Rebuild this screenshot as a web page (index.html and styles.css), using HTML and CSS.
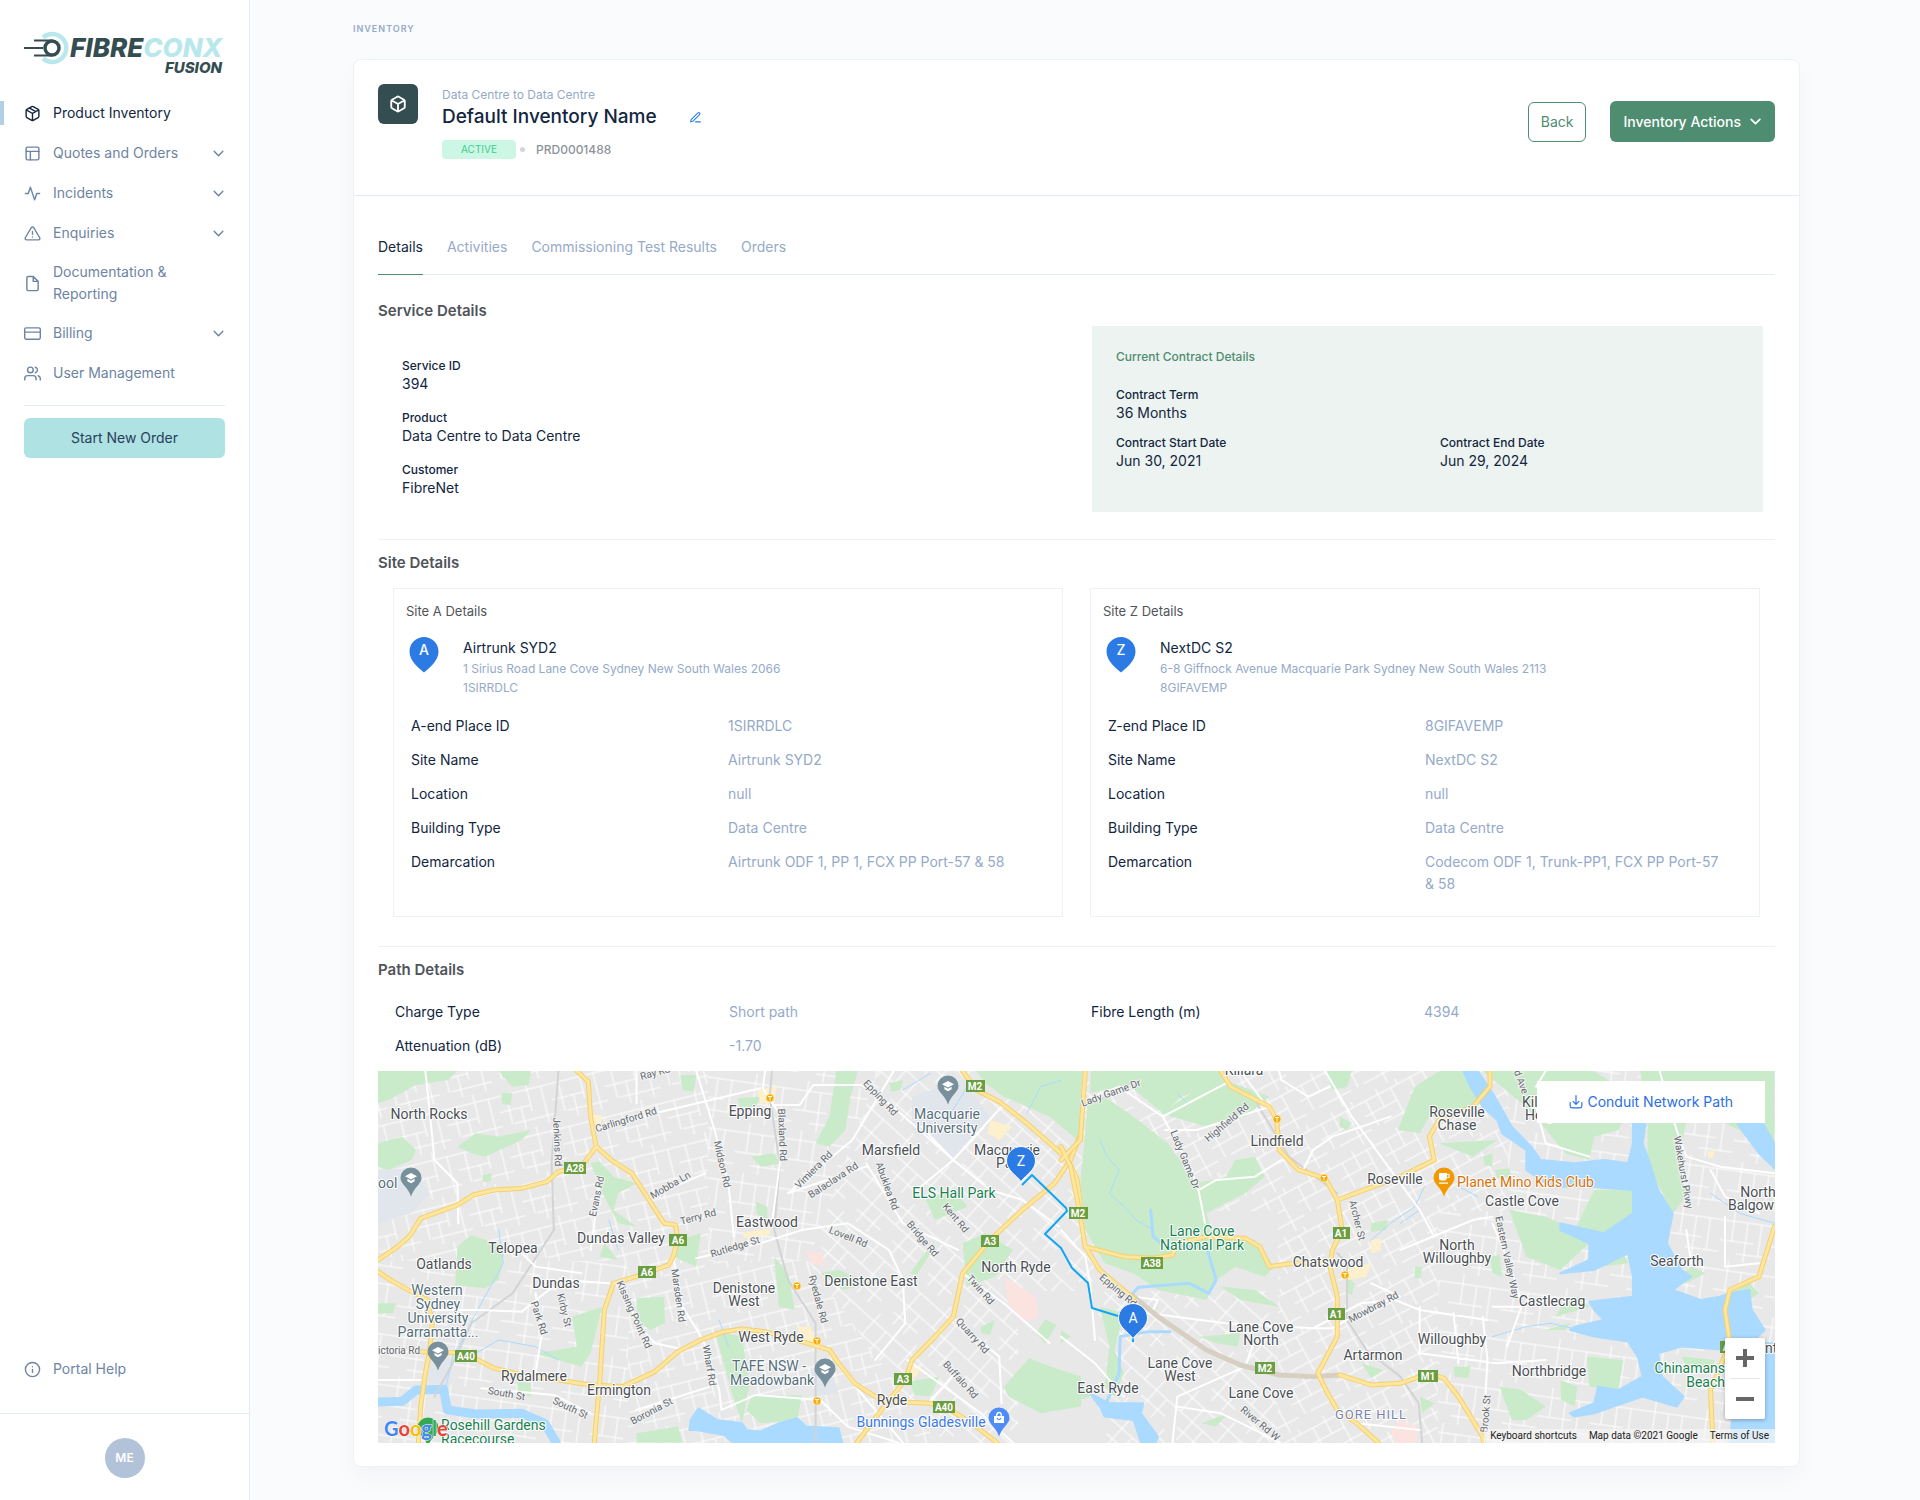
FILE: index.html
```html
<!DOCTYPE html>
<html lang="en">
<head>
<meta charset="utf-8">
<title>Default Inventory Name</title>
<meta name="viewport" content="width=device-width, initial-scale=1">
<link rel="stylesheet" href="styles.css">
</head>
<body>
<svg class="defs" width="0" height="0" aria-hidden="true">
  <symbol id="chev" viewBox="0 0 12 12"><path d="M2 4l4 4 4-4"/></symbol>
</svg>
<div class="app">
  <aside class="sidebar">
    <a class="logo" href="#" aria-label="Fibreconx Fusion">
      <svg viewBox="0 0 201 44" width="201" height="44">
        <path d="M19 5.500a14 14 0 1 1 0 21" fill="none" stroke="#b9e8ec" stroke-width="4.500"/>
        <circle cx="28" cy="16" r="10" fill="#fff"/>
        <path d="M10 8.500h18M0 16h19M10 23.500h18" stroke="#344d50" stroke-width="2.200" fill="none"/>
        <circle cx="28" cy="16" r="7" fill="#fff" stroke="#344d50" stroke-width="3.500"/>
        <text class="logo-main" x="46" y="25" fill="#344d50">FIBRE<tspan fill="#b9e8ec">CONX</tspan></text>
        <text class="logo-sub" x="198" y="41" text-anchor="end" fill="#344d50">FUSION</text>
      </svg>
    </a>
    <nav class="nav">
      <a class="nav-item active" href="#"><svg class="ico" viewBox="0 0 24 24"><path d="M16.500 9.400l-9-5.190M21 16V8a2 2 0 0 0-1-1.730l-7-4a2 2 0 0 0-2 0l-7 4A2 2 0 0 0 3 8v8a2 2 0 0 0 1 1.730l7 4a2 2 0 0 0 2 0l7-4A2 2 0 0 0 21 16zM3.270 6.960L12 12l8.730-5.040M12 22V12"/></svg><span>Product Inventory</span></a>
      <a class="nav-item" href="#"><svg class="ico" viewBox="0 0 24 24"><rect x="3" y="3" width="18" height="18" rx="2"/><path d="M3 9h18M9 21V9"/></svg><span>Quotes and Orders</span><svg class="chev"><use href="#chev"/></svg></a>
      <a class="nav-item" href="#"><svg class="ico" viewBox="0 0 24 24"><path d="M22 12h-4l-3 9L9 3l-3 9H2"/></svg><span>Incidents</span><svg class="chev"><use href="#chev"/></svg></a>
      <a class="nav-item" href="#"><svg class="ico" viewBox="0 0 24 24"><path d="M10.290 3.860L1.820 18a2 2 0 0 0 1.710 3h16.940a2 2 0 0 0 1.710-3L13.710 3.860a2 2 0 0 0-3.420 0zM12 9v4M12 17h.01"/></svg><span>Enquiries</span><svg class="chev"><use href="#chev"/></svg></a>
      <a class="nav-item" href="#"><svg class="ico" viewBox="0 0 24 24"><path d="M13 2H6a2 2 0 0 0-2 2v16a2 2 0 0 0 2 2h12a2 2 0 0 0 2-2V9zM13 2v7h7"/></svg><span>Documentation &amp; Reporting</span></a>
      <a class="nav-item" href="#"><svg class="ico" viewBox="0 0 24 24"><rect x="1" y="4" width="22" height="16" rx="2"/><path d="M1 10h22"/></svg><span>Billing</span><svg class="chev"><use href="#chev"/></svg></a>
      <a class="nav-item" href="#"><svg class="ico" viewBox="0 0 24 24"><path d="M17 21v-2a4 4 0 0 0-4-4H5a4 4 0 0 0-4 4v2M23 21v-2a4 4 0 0 0-3-3.870M16 3.130a4 4 0 0 1 0 7.750"/><circle cx="9" cy="7" r="4"/></svg><span>User Management</span></a>
    </nav>
    <div class="new-order"><button type="button">Start New Order</button></div>
    <div class="nav help">
      <a class="nav-item" href="#"><svg class="ico" viewBox="0 0 24 24"><circle cx="12" cy="12" r="10"/><path d="M12 16v-4M12 8h.01"/></svg><span>Portal Help</span></a>
    </div>
    <div class="user"><button type="button" class="avatar">ME</button></div>
  </aside>

  <main class="main">
    <div class="pretitle">INVENTORY</div>
    <article class="card">
      <header class="card-head">
        <div class="prod-icon"><svg viewBox="0 0 24 24"><path d="M21 16V8a2 2 0 0 0-1-1.730l-7-4a2 2 0 0 0-2 0l-7 4A2 2 0 0 0 3 8v8a2 2 0 0 0 1 1.730l7 4a2 2 0 0 0 2 0l7-4A2 2 0 0 0 21 16zM3.270 6.960L12 12l8.730-5.040M12 22V12"/></svg></div>
        <div class="prod">
          <div class="prod-type">Data Centre to Data Centre</div>
          <div class="prod-title"><h1>Default Inventory Name</h1><button type="button" class="edit" aria-label="Edit name"><svg viewBox="0 0 24 24"><path d="M12 20h9" /><path d="M16.500 3.500a2.120 2.120 0 0 1 3 3L7 19l-4 1 1-4z"/></svg></button></div>
          <div class="prod-meta"><span class="badge">ACTIVE</span><span class="dot"></span><span class="code">PRD0001488</span></div>
        </div>
        <div class="actions">
          <button type="button" class="btn-outline">Back</button>
          <button type="button" class="btn-solid">Inventory Actions<svg class="chev"><use href="#chev"/></svg></button>
        </div>
      </header>

      <div class="card-body">
        <nav class="tabs">
          <a class="tab on" href="#">Details</a>
          <a class="tab" href="#">Activities</a>
          <a class="tab" href="#">Commissioning Test Results</a>
          <a class="tab" href="#">Orders</a>
        </nav>

        <section class="service">
          <h2>Service Details</h2>
          <div class="service-grid">
            <dl class="facts">
              <div><dt>Service ID</dt><dd>394</dd></div>
              <div><dt>Product</dt><dd>Data Centre to Data Centre</dd></div>
              <div><dt>Customer</dt><dd>FibreNet</dd></div>
            </dl>
            <div class="contract">
              <h3>Current Contract Details</h3>
              <dl class="contract-facts">
                <div class="wide"><dt>Contract Term</dt><dd>36 Months</dd></div>
                <div><dt>Contract Start Date</dt><dd>Jun 30, 2021</dd></div>
                <div><dt>Contract End Date</dt><dd>Jun 29, 2024</dd></div>
              </dl>
            </div>
          </div>
        </section>

        <section class="sites">
          <h2>Site Details</h2>
          <div class="site-grid">
            <div class="site">
              <h3>Site A Details</h3>
              <div class="site-head">
                <svg class="pin" viewBox="0 0 30 36" width="30" height="36"><path d="M15 0C23 0 29.500 6.400 29.500 14.500 29.500 24 20 31 15 35.500 10 31 .5 24 .5 14.500 .5 6.400 7 0 15 0z" fill="#2c7be5"/><text x="15" y="18" text-anchor="middle">A</text></svg>
                <div><div class="site-name">Airtrunk SYD2</div><div class="site-addr">1 Sirius Road Lane Cove Sydney New South Wales 2066<br>1SIRRDLC</div></div>
              </div>
              <dl class="rows">
                <dt>A-end Place ID</dt><dd>1SIRRDLC</dd>
                <dt>Site Name</dt><dd>Airtrunk SYD2</dd>
                <dt>Location</dt><dd>null</dd>
                <dt>Building Type</dt><dd>Data Centre</dd>
                <dt>Demarcation</dt><dd>Airtrunk ODF 1, PP 1, FCX PP Port-57 &amp; 58</dd>
              </dl>
            </div>
            <div class="site">
              <h3>Site Z Details</h3>
              <div class="site-head">
                <svg class="pin" viewBox="0 0 30 36" width="30" height="36"><path d="M15 0C23 0 29.500 6.400 29.500 14.500 29.500 24 20 31 15 35.500 10 31 .5 24 .5 14.500 .5 6.400 7 0 15 0z" fill="#2c7be5"/><text x="15" y="18" text-anchor="middle">Z</text></svg>
                <div><div class="site-name">NextDC S2</div><div class="site-addr">6-8 Giffnock Avenue Macquarie Park Sydney New South Wales 2113<br>8GIFAVEMP</div></div>
              </div>
              <dl class="rows">
                <dt>Z-end Place ID</dt><dd>8GIFAVEMP</dd>
                <dt>Site Name</dt><dd>NextDC S2</dd>
                <dt>Location</dt><dd>null</dd>
                <dt>Building Type</dt><dd>Data Centre</dd>
                <dt>Demarcation</dt><dd>Codecom ODF 1, Trunk-PP1, FCX PP Port-57 &amp; 58</dd>
              </dl>
            </div>
          </div>
        </section>

        <section class="path">
          <h2>Path Details</h2>
          <dl class="rows path-rows">
            <dt>Charge Type</dt><dd>Short path</dd>
            <dt>Fibre Length (m)</dt><dd>4394</dd>
            <dt>Attenuation (dB)</dt><dd>-1.70</dd>
          </dl>
          <div class="map">
            <svg class="map-art" viewBox="0 0 1397 372" preserveAspectRatio="xMidYMid slice" role="img" aria-label="Map of the network path">
              <defs>
                <pattern id="s1" width="54" height="46" patternUnits="userSpaceOnUse" patternTransform="rotate(-14)"><path class="st" d="M0 8H54M0 24H32M12 38H54M10 8V38M32 0V30M46 8V46M22 24V46"/></pattern>
                <pattern id="s2" width="48" height="52" patternUnits="userSpaceOnUse" patternTransform="rotate(42)"><path class="st" d="M0 10H48M0 28H48M16 42H48M8 0V28M24 10V52M38 28V52"/></pattern>
                <pattern id="s3" width="50" height="44" patternUnits="userSpaceOnUse" patternTransform="rotate(-28)"><path class="st" d="M0 6H50M0 20H36M14 34H50M8 6V34M22 0V20M36 6V44M44 0V6"/></pattern>
                <pattern id="s4" width="52" height="50" patternUnits="userSpaceOnUse" patternTransform="rotate(8)"><path class="st" d="M0 10H52M0 30H34M18 42H52M12 0V30M26 10V50M40 10V42"/></pattern>
                <path id="poi" d="M0-10.500A10.500 10.500 0 0 1 10.500 0C10.500 6 3 9 0 18.500-3 9-10.500 6-10.500 0A10.500 10.500 0 0 1 0-10.500z"/>
                <path id="cap" d="M0-5l6 3.200L0 1.400-6-1.800zM-3.600.800L0 2.800 3.600.800V3.200L0 5.200-3.600 3.200z" fill="#fff"/>
                <path id="mark" d="M0-15.500C8-15.500 14.500-9 14.500-1 14.500 8 5 13 0 19.500-5 13-14.500 8-14.500-1-14.500-9-8-15.500 0-15.500z" fill="#2c7be5" stroke="#fff" stroke-width="1"/>
              </defs>
              <rect width="1397" height="372" fill="#e8e8e8"/>
              <rect width="330" height="190" fill="url(#s1)"/>
              <path d="M330 0H500L430 190H330zM0 190H250V372H0z" fill="url(#s4)"/>
              <path d="M500 0H720V372H560L430 190zM640 372H900V220H640z" fill="url(#s2)"/>
              <path d="M250 190H430L560 372H250z" fill="url(#s1)"/>
              <path d="M720 0H1130V140H720zM900 140H1060V372H900z" fill="url(#s3)"/>
              <path d="M1060 140H1397V372H1060zM1130 0H1397V140H1130z" fill="url(#s4)"/>

              <!-- western half -->
              <g class="half" transform="matrix(.4592 0 0 .3333 -17 -141)">
                <path class="campus" d="M1200 500L1310 450 1370 560 1290 680 1200 600zM37 720L110 715 150 790 110 850 37 880zM150 1270L200 1290 190 1370 130 1350zM980 1320L1020 1320 1040 1390 990 1400z"/>
                <path class="green" d="M37 423H210L190 450 120 465 60 510 37 520zM300 423H370L365 465 330 470 310 440zM305 490L330 490 325 525 308 522zM37 640L90 620 120 660 110 690 60 720 37 710zM210 650L250 610 300 620 370 600 350 630 270 680 240 670zM1035 423H1082L1066 500 1055 600 1020 650 990 640 1020 560zM850 680L900 670 912 700 870 710zM695 435L730 435 725 485 700 480zM820 505L870 500 860 530 825 530zM500 700L520 695 550 740 600 760 560 790 550 840 600 890 560 880 530 800zM210 950L240 915 315 950 300 1050 270 1075 205 1065zM37 1120H75L70 1150 37 1150zM460 1160L525 1130 500 1270 480 1310 400 1280 380 1270 470 1250zM600 1105L660 1100 662 1180 630 1200 600 1170zM770 1200L830 1220 845 1370 830 1480 810 1400 790 1300zM850 1400L960 1395 950 1470 870 1480 840 1440zM600 1510L690 1490 700 1538 600 1538zM690 930L740 910 730 1010 680 980zM900 980L930 1030 945 1140 910 1130zM1195 1030L1250 930 1240 970 1210 1035zM1400 1370L1455 1285 1500 1310 1568 1340V1430L1480 1450 1410 1400zM1470 1210L1490 1168 1515 1185 1490 1240zM1310 940L1360 910 1420 960 1380 1040 1320 1070zM1340 423H1568V640L1500 560 1400 500 1360 460zM1230 810L1290 775 1320 830 1250 870zM1195 1355L1260 1340 1240 1400 1205 1395zM1150 460L1180 450 1175 480 1155 485zM265 735L285 730 282 755 265 755zM1000 1030L1040 1020 1110 1060 1050 1080zM340 1355L370 1360 370 1400 342 1390zM1350 1190L1380 1170 1370 1215 1350 1210zM860 815L885 830 885 880 862 850zM530 940L560 990 520 980z"/>
                <path class="pink" d="M968 960L1005 970 1010 1008 980 1000zM1400 1040L1470 1100 1475 1160 1440 1180 1410 1120z"/>
                <path class="sand" d="M862 480L905 470 900 520 870 520zM505 555L525 555 520 600 508 600zM830 910L890 895 890 915 835 925zM1370 570L1418 590 1390 630 1365 610zM1190 1310L1220 1310 1210 1340 1190 1350zM950 1190L980 1190 990 1240 960 1230z"/>
                <path class="brook" d="M1550 440L1480 470 1450 550M1320 470L1280 560M300 900L310 1000 250 1150 200 1280 185 1370M540 870L560 960M250 1270L300 1230 380 1250 430 1290M780 1170L800 1250M1180 480L1240 430"/>
                <path class="river" d="M37 1416L90 1414 120 1380 180 1378 188 1440 250 1452 350 1450 400 1480 425 1538"/>
                <path class="water" d="M715 1500L718 1470 735 1435 775 1470 830 1480 840 1500 870 1505 910 1480 950 1465 970 1490 1040 1495 1048 1538H810L790 1515 730 1500z"/>
                <path class="rail" d="M895 423L890 500 912 700 900 900 930 1050 990 1180 990 1538M430 423L415 700 420 900 330 1090 240 1180 200 1300 160 1400"/>
                <path class="road" d="M512 602L640 550 870 475M730 423L770 600 800 760 812 920M880 423L875 475 915 560 912 700 895 880M900 525H955L985 465H1090L1150 520 1290 690 1370 780 1440 810 1520 890M1220 590L1290 690M1395 530L1290 690 1210 780M140 423L150 550 160 690 210 760 212 880M600 423L600 520M630 800L750 730M680 980L700 1130 745 1230 780 1380 785 1440 860 1395 1000 1410M730 985L870 940 960 900 1060 880 1150 960 1180 1050 1185 1180 1120 1290M1290 1165L1390 1280 1395 1420M1310 1030L1400 1120 1500 1240M150 1140H260L350 1145 400 1090 440 1050 540 1060M930 790L1100 710M930 790L1070 630 1160 423M1190 1290L1350 1450 1420 1538M1235 1420L1300 1320M570 1060L600 1180 640 1240 690 1255M262 1375L420 1395 500 1450M520 760L510 860 500 960M37 1265H150M37 1350L130 1350M380 1090L395 1200 380 1330M600 1440L760 1370M1100 700L1180 880 1300 960M1040 1310L1180 1538M350 970L380 1010 480 1030M1000 1410L1060 1490 1170 1538"/>
                <g class="hw">
                  <path d="M470 423L495 455 500 560 512 650 545 690 590 730 625 805 660 880 685 885 690 925 680 980 670 1005 610 1035 550 1060 530 1140 520 1350 508 1538"/>
                  <path d="M512 650L480 710 430 725 405 755 350 775 290 780 245 795 210 825 130 865 105 920 80 950 37 990"/>
                  <path d="M37 1025L70 1055 110 1085 145 1110 155 1180 150 1260 140 1330 130 1430 125 1538"/>
                  <path d="M120 1265L200 1268 240 1280 290 1315 350 1335 430 1350 500 1365 570 1370 640 1325 690 1265 740 1230 790 1205 830 1197 880 1205 960 1235 1020 1260 1040 1300 1075 1360 1120 1400 1150 1415 1240 1420 1290 1445 1340 1490 1385 1538"/>
                  <path d="M1568 610L1545 690 1510 760 1440 840 1370 930 1310 1030 1290 1160 1250 1220 1200 1290 1185 1350 1150 1410 1080 1538"/>
                  <path d="M1310 423L1340 480 1390 515 1450 580 1500 640 1540 690 1560 750 1568 840"/>
                </g>
                <g class="hw top">
                  <path d="M470 423L495 455 500 560 512 650 545 690 590 730 625 805 660 880 685 885 690 925 680 980 670 1005 610 1035 550 1060 530 1140 520 1350 508 1538"/>
                  <path d="M512 650L480 710 430 725 405 755 350 775 290 780 245 795 210 825 130 865 105 920 80 950 37 990"/>
                  <path d="M37 1025L70 1055 110 1085 145 1110 155 1180 150 1260 140 1330 130 1430 125 1538"/>
                  <path d="M120 1265L200 1268 240 1280 290 1315 350 1335 430 1350 500 1365 570 1370 640 1325 690 1265 740 1230 790 1205 830 1197 880 1205 960 1235 1020 1260 1040 1300 1075 1360 1120 1400 1150 1415 1240 1420 1290 1445 1340 1490 1385 1538"/>
                  <path d="M1568 610L1545 690 1510 760 1440 840 1370 930 1310 1030 1290 1160 1250 1220 1200 1290 1185 1350 1150 1410 1080 1538"/>
                  <path d="M1310 423L1340 480 1390 515 1450 580 1500 640 1540 690 1560 750 1568 840"/>
                </g>
              </g>

              <!-- eastern half -->
              <g class="half" transform="matrix(.4847 0 0 .3333 683 -141)">
                <path class="green" d="M0 423H45L35 600 0 560zM55 520L90 500 150 560 220 640 280 760 340 740 360 690 400 680 420 740 380 790 300 850 310 900 400 930 440 1010 420 1040 360 1010 320 1050 300 1110 200 1080 150 1030 90 1000 50 900 40 760zM62 423H330L340 445 250 500 210 550 140 465 60 490zM205 550L320 440 430 500 380 560 300 590zM545 423H600L590 470 560 480zM695 600L730 470 780 423H845L870 500 830 540 760 560 740 610zM780 640L900 630 850 680zM870 423H1100L1180 500 1150 600 1100 620 1090 690 1040 670 990 580 950 520zM1195 423H1472V720L1400 600 1340 560 1290 570 1275 700 1290 800 1262 850 1230 760 1210 700 1210 578zM1060 900L1100 780 1190 780 1220 830 1190 890 1110 910zM925 840L1000 860 1060 900 1090 940 1030 1020 960 980zM330 1070L400 1080 450 1130 370 1110zM285 1220L370 1210 365 1250 320 1240zM80 1130L130 1150 110 1260 130 1330 110 1400 90 1370 100 1250zM0 1340L40 1350 60 1400 0 1430zM1085 1280L1160 1290 1150 1380 1090 1370zM1030 1350L1065 1370 1060 1430 1032 1410zM905 1370L950 1380 1000 1430 960 1470 930 1470zM1020 1160L1090 1130 1070 1100 1040 1110zM1060 1020L1170 1000 1160 970 1090 1000zM640 880L675 870 670 900 640 905zM730 1010L745 1010 742 1045 730 1045zM885 980L905 975 910 1040 890 1030zM870 680L890 670 890 710 875 705zM895 720L925 715 930 740 900 745zM740 1400L770 1420 745 1450zM810 1310L845 1310 840 1345 812 1340zM620 1300L665 1320 640 1345zM575 560L600 580 590 600 575 590zM1275 1040L1300 1010 1330 1030 1290 1060zM1380 1090L1420 1060 1440 1090 1400 1130zM1000 1200L1050 1180 1040 1200zM195 640L210 640 205 700 195 700zM290 1480L345 1450 320 1490zM1280 1280L1350 1290 1340 1320 1290 1310zM590 1040L605 1060 600 1095 590 1090zM0 1200V1240L20 1220z"/>
                <path class="pink" d="M680 1500L700 1470 735 1490 735 1538 690 1538z"/>
                <path class="sand" d="M640 930L660 925 660 960 640 970zM585 1020L640 1000 630 1040 590 1050zM1335 665L1350 660 1345 685 1335 680z"/>
                <path class="river thin" d="M185 840L190 920 215 950 300 950 320 1050 305 1090 265 1060 160 1072 135 1110M225 1205L180 1205 122 1220 120 1330 90 1430"/>
                <path class="brook" d="M80 630L95 680 120 720 100 790 130 830 155 870 190 900M890 1220L960 1190 1010 1180 1070 1200M750 770L730 830 680 880 640 930M820 770L860 800M700 880L740 840M1340 790L1400 850 1472 880M240 490L260 520"/>
                <path class="water" d="M830 423L860 423 895 500 930 590 970 650 990 690 1060 700 1120 690 1170 700 1180 640 1180 560H1208L1200 640 1215 700 1232 780 1262 850 1250 940 1280 1020 1300 1040 1262 1080 1320 1110 1360 1100 1380 1090 1420 1080 1425 1140 1452 1200 1430 1230 1370 1220 1375 1260 1280 1250 1232 1270 1240 1340 1285 1400 1270 1430 1200 1400 1140 1430 1100 1450 1060 1460 1050 1450 1100 1420 1108 1370 1150 1380 1200 1340 1190 1280 1170 1235 1100 1220 1050 1200 1060 1190 1120 1170 1100 1140 1090 1115 1180 1100 1180 1040 1170 970 1100 1020 1030 1030 1090 990 1090 940 1030 900 1030 880 1120 910 1180 850 1180 780 1090 770 1010 770 960 720 960 660 910 610 900 570 870 530 845 470zM1385 560H1440L1472 640V715L1440 670zM1455 1240H1472V1538H1380L1385 1460 1440 1460zM60 1390L100 1420 170 1420 165 1450 200 1520 195 1538H165L150 1470 90 1460 80 1430z"/>
                <path class="rail" d="M400 510L470 680 570 790M570 970L590 1000 590 1170 630 1260 700 1340 738 1420 745 1538"/>
                <path class="road" d="M1235 423L1270 600 1290 680 1360 710 1472 730M545 423L600 560 680 720 740 840 770 920M50 510L120 470 210 560 270 720 285 790 297 880M210 560L340 460M215 600L280 600 345 570 430 530M285 780L320 750 400 740 455 690M500 720L520 660 560 620 680 560M370 423L430 540M180 1150L340 1180 520 1195 620 1120 690 1110 740 1140 880 1170M890 1130H950L920 1250M810 1150L820 1300M740 1130V1270L900 1300 1000 1290M230 1538L240 1400 380 1310 400 1230M240 1430L330 1450 400 1500 450 1538M890 880L930 1020 950 1120M0 900L50 980 60 1060 70 1230M0 1220L70 1300 130 1400M450 423L455 450 510 500 555 470M700 960L850 870 890 860M870 1160L880 1290 870 1538M1290 900L1300 1000M1440 1000L1370 1010 1370 860M590 1170L560 1195 520 1195M640 1060L700 1100M150 1100L200 1110 190 1140M980 530L1000 640 1090 680M1340 720L1370 800 1440 850M610 1480L740 1500M1000 423L980 470"/>
                <path class="tunnel" d="M150 1100L200 1160 250 1210 300 1260 370 1305 450 1335 520 1340 575 1335"/>
                <g class="hw">
                  <path d="M50 423L40 630 0 690"/>
                  <path d="M0 650L20 710 40 860 50 950 80 1020 120 1070 150 1105"/>
                  <path d="M575 1335L640 1365 700 1360 760 1330 790 1345 820 1400 870 1520 872 1538"/>
                  <path d="M50 950L130 980 190 985 230 975 240 940 300 920 380 925 410 950 430 1010 480 1000 555 1000"/>
                  <path d="M330 423L350 470 430 530 445 570 450 660 490 720 545 745 570 810 580 900 560 960 555 1010 570 1100 570 1220 530 1330 550 1390 570 1440 610 1480 655 1538"/>
                  <path d="M885 423L885 470 850 530 780 570 760 620 770 690 700 740 570 810"/>
                  <path d="M1472 890L1440 1040 1380 1080 1370 1140 1380 1240 1340 1380 1345 1538"/>
                </g>
                <g class="hw top">
                  <path d="M50 423L40 630 0 690"/>
                  <path d="M0 650L20 710 40 860 50 950 80 1020 120 1070 150 1105"/>
                  <path d="M575 1335L640 1365 700 1360 760 1330 790 1345 820 1400 870 1520 872 1538"/>
                  <path d="M50 950L130 980 190 985 230 975 240 940 300 920 380 925 410 950 430 1010 480 1000 555 1000"/>
                  <path d="M330 423L350 470 430 530 445 570 450 660 490 720 545 745 570 810 580 900 560 960 555 1010 570 1100 570 1220 530 1330 550 1390 570 1440 610 1480 655 1538"/>
                  <path d="M885 423L885 470 850 530 780 570 760 620 770 690 700 740 570 810"/>
                  <path d="M1472 890L1440 1040 1380 1080 1370 1140 1380 1240 1340 1380 1345 1538"/>
                </g>
              </g>
              <path class="route" d="M644 114L654 104 688 137 689 140 667 163 683 177 694 197 710 212 714 237 740 245 755 246M755 264V271"/>

              <g class="street">
                <text transform="translate(249 52) rotate(-17)">Carlingford Rd</text>
                <text transform="translate(176 71) rotate(88)">Jenkins Rd</text>
                <text transform="translate(401 64) rotate(88)">Blaxland Rd</text>
                <text transform="translate(341 94) rotate(77)">Midson Rd</text>
                <text transform="translate(294 117) rotate(-30)">Mobba Ln</text>
                <text transform="translate(222 126) rotate(-78)">Evans Rd</text>
                <text transform="translate(321 149) rotate(-15)">Terry Rd</text>
                <text transform="translate(500 29) rotate(47)">Epping Rd</text>
                <text transform="translate(438 101) rotate(-45)">Vimiera Rd</text>
                <text transform="translate(457 112) rotate(-33)">Balaclava Rd</text>
                <text transform="translate(506 116) rotate(70)">Abuklea Rd</text>
                <text transform="translate(575 149) rotate(50)">Kent Rd</text>
                <text transform="translate(542 170) rotate(50)">Bridge Rd</text>
                <text transform="translate(469 169) rotate(22)">Lovell Rd</text>
                <text transform="translate(358 179) rotate(-17)">Rutledge St</text>
                <text transform="translate(437 229) rotate(75)">Ryedale Rd</text>
                <text transform="translate(297 225) rotate(82)">Marsden Rd</text>
                <text transform="translate(253 245) rotate(66)">Kissing Point Rd</text>
                <text transform="translate(183 240) rotate(76)">Kirby St</text>
                <text transform="translate(158 248) rotate(72)">Park Rd</text>
                <text transform="translate(600 221) rotate(48)">Twin Rd</text>
                <text transform="translate(592 267) rotate(48)">Quarry Rd</text>
                <text transform="translate(580 311) rotate(48)">Buffalo Rd</text>
                <text transform="translate(328 295) rotate(80)">Wharf Rd</text>
                <text transform="translate(275 343) rotate(-28)">Boronia St</text>
                <text transform="translate(128 326) rotate(10)">South St</text>
                <text transform="translate(191 340) rotate(25)">South St</text>
                <text class="start" x="0" y="283">ictoria Rd</text>
                <text transform="translate(278 5) rotate(-15)">Ray Rd</text>
                <text transform="translate(734 25) rotate(-20)">Lady Game Dr</text>
                <text transform="translate(804 90) rotate(68)">Lady Game Dr</text>
                <text transform="translate(851 54) rotate(-40)">Highfield Rd</text>
                <text transform="translate(976 150) rotate(76)">Archer St</text>
                <text transform="translate(1126 187) rotate(78)">Eastern Valley Way</text>
                <text transform="translate(997 239) rotate(-28)">Mowbray Rd</text>
                <text transform="translate(1111 343) rotate(-85)">Brook St</text>
                <text transform="translate(1302 102) rotate(80)">Wakehurst Pkwy</text>
                <text transform="translate(880 355) rotate(40)">River Rd W</text>
                <text transform="translate(738 222) rotate(40)">Epping Rd</text>
                <text transform="translate(1140 12) rotate(70)">d Ave</text>
              </g>

              <g class="place">
                <text x="51" y="48">North Rocks</text><text x="372" y="45">Epping</text>
                <text x="513" y="84">Marsfield</text><text x="629" y="84">Macquarie</text><text x="632" y="97">Park</text>
                <text x="1079" y="46">Roseville</text><text x="1079" y="59">Chase</text>
                <text class="start" x="1144" y="36">Killarney</text><text class="start" x="1147" y="49">Heights</text>
                <text x="899" y="75">Lindfield</text><text x="1017" y="113">Roseville</text><text x="1144" y="135">Castle Cove</text>
                <text x="1380" y="126">North</text><text class="start" x="1350" y="139">Balgowlah</text>
                <text x="389" y="156">Eastwood</text><text x="243" y="172">Dundas Valley</text><text x="135" y="182">Telopea</text>
                <text x="66" y="198">Oatlands</text><text x="178" y="217">Dundas</text>
                <text x="366" y="222">Denistone</text><text x="366" y="235">West</text><text x="493" y="215">Denistone East</text>
                <text x="638" y="201">North Ryde</text><text x="950" y="196">Chatswood</text>
                <text x="1079" y="179">North</text><text x="1079" y="192">Willoughby</text>
                <text x="1299" y="195">Seaforth</text><text x="1174" y="235">Castlecrag</text>
                <text x="393" y="271">West Ryde</text><text x="156" y="310">Rydalmere</text><text x="241" y="324">Ermington</text>
                <text x="514" y="334">Ryde</text><text x="730" y="322">East Ryde</text>
                <text x="883" y="261">Lane Cove</text><text x="883" y="274">North</text>
                <text x="802" y="297">Lane Cove</text><text x="802" y="310">West</text><text x="883" y="327">Lane Cove</text>
                <text x="995" y="289">Artarmon</text><text x="1074" y="273">Willoughby</text><text x="1171" y="305">Northbridge</text>
                <text class="start" x="1387" y="282">nt</text><text x="866" y="4">Killara</text>
              </g>
              <g class="place uni">
                <text x="569" y="48">Macquarie</text><text x="569" y="62">University</text>
                <text class="start" x="0" y="117">ool</text>
                <text x="59" y="224">Western</text><text x="60" y="238">Sydney</text><text x="60" y="252">University</text><text x="60" y="266">Parramatta...</text>
                <text x="391" y="300">TAFE NSW -</text><text x="394" y="314">Meadowbank</text>
              </g>
              <g class="place park">
                <text x="576" y="127">ELS Hall Park</text><text x="824" y="165">Lane Cove</text><text x="824" y="179">National Park</text>
                <text class="end" x="1347" y="302">Chinamans</text><text class="end" x="1347" y="316">Beach</text>
                <text class="start" x="63" y="359">Rosehill Gardens</text><text class="start" x="63" y="373">Racecourse</text>
              </g>
              <g class="place food"><text class="start" x="1079" y="116">Planet Mino Kids Club</text></g>
              <g class="place shop"><text x="543" y="356">Bunnings Gladesville</text></g>
              <g class="place area"><text x="993" y="348">GORE HILL</text></g>

              <g class="shield">
                <rect x="588" y="9" width="19" height="12"/><text x="597" y="19">M2</text>
                <rect x="186" y="91" width="22" height="12"/><text x="197" y="101">A28</text>
                <rect x="291" y="163" width="18" height="12"/><text x="300" y="173">A6</text>
                <rect x="260" y="195" width="18" height="12"/><text x="269" y="205">A6</text>
                <rect x="603" y="164" width="18" height="12"/><text x="612" y="174">A3</text>
                <rect x="77" y="279" width="22" height="12"/><text x="88" y="289">A40</text>
                <rect x="516" y="302" width="18" height="12"/><text x="525" y="312">A3</text>
                <rect x="555" y="330" width="22" height="12"/><text x="566" y="340">A40</text>
                <rect x="691" y="136" width="19" height="12"/><text x="700" y="146">M2</text>
                <rect x="763" y="186" width="22" height="12"/><text x="774" y="196">A38</text>
                <rect x="955" y="156" width="17" height="12"/><text x="963" y="166">A1</text>
                <rect x="950" y="237" width="17" height="12"/><text x="958" y="247">A1</text>
                <rect x="877" y="291" width="20" height="12"/><text x="887" y="301">M2</text>
                <rect x="1040" y="299" width="20" height="12"/><text x="1050" y="309">M1</text>
                <rect x="1342" y="270" width="18" height="12"/><text x="1351" y="280">A8</text>
              </g>
              <g class="station">
                <circle cx="392" cy="27" r="4"/><circle cx="419" cy="215" r="4"/><circle cx="439" cy="270" r="4"/><circle cx="439" cy="330" r="4"/><circle cx="899" cy="48" r="4"/><circle cx="946" cy="107" r="4"/><circle cx="967" cy="204" r="4"/>
                <path d="M390 25.500h4M392 25.500v4M417 213.500h4M419 213.500v4M437 268.500h4M439 268.500v4M437 328.500h4M439 328.500v4M897 46.500h4M899 46.500v4M944 105.500h4M946 105.500v4M965 202.500h4M967 202.500v4"/>
              </g>
              <g fill="#78909c">
                <g transform="translate(570 15)"><use href="#poi"/><use href="#cap"/></g>
                <g transform="translate(33 107)"><use href="#poi"/><use href="#cap"/></g>
                <g transform="translate(60 281)"><use href="#poi"/><use href="#cap"/></g>
                <g transform="translate(447 298)"><use href="#poi"/><use href="#cap"/></g>
              </g>
              <g transform="translate(1066 107)"><use href="#poi" fill="#f29900"/><path d="M-5-5h8v1h2.500v4h-2.500q-.5 2.500-2.500 2.500h-3q-2.500 0-2.500-2.500zM3-3v2.200h1.500V-3zM-5 4.500h9v1.200h-9z" fill="#fff" fill-rule="evenodd"/></g>
              <g transform="translate(621 347)"><use href="#poi" fill="#4e8df5"/><path d="M-2.500-1q0-4.500 2.500-4.500t2.500 4.500" fill="none" stroke="#fff" stroke-width="1.400"/><path d="M-5-2h10v7h-10z" fill="#fff"/><path d="M-2 0q2 3.500 4 0" fill="none" stroke="#4e8df5" stroke-width="1.200"/></g>
              <g transform="translate(50 357)"><use href="#poi" fill="#34a853"/></g>
              <g class="marker" transform="translate(643 91)"><use href="#mark"/><text y="4">Z</text></g>
              <g class="marker" transform="translate(755 248)"><use href="#mark"/><text y="4">A</text></g>
              <text class="google" x="6" y="365"><tspan fill="#4285f4">G</tspan><tspan fill="#ea4335">o</tspan><tspan fill="#fbbc05">o</tspan><tspan fill="#4285f4">g</tspan><tspan fill="#34a853">l</tspan><tspan fill="#ea4335">e</tspan></text>
            </svg>
            <button type="button" class="conduit"><svg viewBox="0 0 24 24"><path d="M2 13v6a3 3 0 0 0 3 3h14a3 3 0 0 0 3-3v-6M12 1v14M7 11l5 5 5-5"/></svg>Conduit Network Path</button>
            <div class="zoom"><button type="button" aria-label="Zoom in"><svg viewBox="0 0 18 18"><path d="M9 0v18M0 9h18"/></svg></button><button type="button" aria-label="Zoom out"><svg viewBox="0 0 18 18"><path d="M0 9h18"/></svg></button></div>
            <div class="credits"><a href="#">Keyboard shortcuts</a><span>Map data ©2021 Google</span><a href="#">Terms of Use</a></div>
          </div>
        </section>
      </div>
    </article>
  </main>
</div>
</body>
</html>
```

FILE: styles.css
```css
* { box-sizing: border-box; }
body {
  margin: 0;
  background: #f9fbfd;
  color: #12263f;
  font-family: Inter, "Liberation Sans", sans-serif;
  font-size: 14px;
  line-height: 22px;
}
h1, h2, h3, dl, dd, dt { margin: 0; font-weight: 400; }
a { color: inherit; text-decoration: none; }
button { font: inherit; color: inherit; border: 0; background: none; padding: 0; cursor: pointer; }
svg { display: block; }
.defs { position: absolute; }
.app { display: flex; min-height: 100vh; }

/* sidebar */
.sidebar {
  flex: 0 0 250px;
  display: flex;
  flex-direction: column;
  background: #fff;
  border-right: 1px solid #e3ebf6;
}
.logo { padding: 32px 24px 17px; }
.logo svg { overflow: visible; }
.logo-main { font-size: 26px; font-weight: 800; font-style: italic; }
.logo-sub { font-size: 15px; font-weight: 800; font-style: italic; }
.nav-item {
  display: flex;
  align-items: center;
  gap: 12px;
  min-height: 40px;
  padding: 8px 24px;
  color: #6e84a3;
  position: relative;
}
.nav-item span { flex: 1; }
.nav-item.active { color: #12263f; }
.nav-item.active::before {
  content: "";
  position: absolute;
  left: 0;
  top: 8px;
  bottom: 8px;
  width: 4px;
  background: #b1d0e8;
}
.ico { width: 17px; height: 17px; fill: none; stroke: currentColor; stroke-width: 2; stroke-linecap: round; stroke-linejoin: round; }
.chev { width: 13px; height: 13px; fill: none; stroke: currentColor; stroke-width: 1.3; stroke-linecap: round; stroke-linejoin: round; }
.new-order { margin: 12px 24px 0; padding-top: 12px; border-top: 1px solid #e3ebf6; }
.new-order button { width: 100%; height: 40px; border-radius: 6px; background: #aee2e3; color: #283e59; }
.help { margin-top: auto; padding-bottom: 24px; }
.user { display: flex; justify-content: center; padding: 24px 0 22px; border-top: 1px solid #e3ebf6; }
.avatar { width: 40px; height: 40px; border-radius: 50%; background: #b1c2d9; color: #fff; font-size: 12px; font-weight: 600; }

/* main column */
.main { flex: 1; min-width: 0; padding: 20px 120px 33px 103px; }
.pretitle { color: #95aac9; font-size: 9px; line-height: 18px; font-weight: 600; letter-spacing: 1px; margin-bottom: 21px; }
.card { background: #fff; border: 1px solid #edf2f9; border-radius: 8px; box-shadow: 0 12px 24px rgba(18, 38, 63, .03); }
.card-head { display: flex; align-items: center; padding: 24px 24px 36px; border-bottom: 1px solid #e3ebf6; }
.prod-icon { align-self: flex-start; display: grid; place-items: center; width: 40px; height: 40px; margin-right: 24px; border-radius: 6px; background: #344d50; }
.prod-icon svg { width: 18px; height: 18px; fill: none; stroke: #fff; stroke-width: 2.5; stroke-linejoin: round; }
.prod { flex: 1; }
.prod-type { color: #95aac9; font-size: 12px; line-height: 21px; }
.prod-title { display: flex; align-items: center; gap: 32px; margin-bottom: 11px; }
.prod-title h1 { font-size: 19px; line-height: 24px; font-weight: 500; }
.edit { color: #2c7be5; }
.edit svg { width: 13px; height: 13px; fill: none; stroke: currentColor; stroke-width: 2; stroke-linecap: round; stroke-linejoin: round; }
.prod-meta { display: flex; align-items: center; }
.badge { width: 74px; height: 19px; border-radius: 4px; background: #ccf7e5; color: #37cf90; font-size: 10px; line-height: 19px; text-align: center; }
.dot { width: 5px; height: 5px; margin: 0 11px 0 4px; border-radius: 50%; background: #d2d6dc; }
.code { color: #8d939b; font-size: 12px; line-height: 19px; font-weight: 500; }
.actions { display: flex; align-items: center; gap: 24px; }
.btn-outline { height: 40px; padding: 0 12px; border: 1px solid #4e8d70; border-radius: 6px; color: #4e8d70; }
.btn-solid { display: flex; align-items: center; gap: 8px; height: 41px; padding: 0 13px; border-radius: 6px; background: #4e8d70; color: #fff; font-weight: 500; }
.btn-solid .chev { stroke-width: 1.6; }

.card-body { padding: 40px 24px 23px; }
.tabs { display: flex; gap: 24px; border-bottom: 1px solid #e3ebf6; }
.tab { color: #95aac9; padding-bottom: 16px; margin-bottom: -1px; border-bottom: 1px solid transparent; }
.tab.on { color: #12263f; border-color: #4e8d70; }
h2 { color: #50545a; font-size: 15px; line-height: 24px; font-weight: 600; }

.service { padding-top: 24px; }
.service-grid { display: grid; grid-template-columns: 714fr 671fr; margin-top: 3px; padding-right: 12px; }
.service dt { font-size: 12px; line-height: 18px; font-weight: 500; }
.service dd { line-height: 18px; }
.facts { display: flex; flex-direction: column; gap: 16px; padding: 31px 24px 0; }
.contract { padding: 22px 24px 42px; background: #edf3f1; }
.contract h3 { margin-bottom: 20px; color: #4e8d70; font-size: 12px; line-height: 18px; font-weight: 500; }
.contract-facts { display: grid; grid-template-columns: 324fr 299fr; row-gap: 12px; }
.contract-facts .wide { grid-column: 1 / -1; }

.sites { margin-top: 27px; padding-top: 11px; border-top: 1px solid #edf2f9; }
.site-grid { display: grid; grid-template-columns: 1fr 1fr; gap: 27px; margin-top: 13px; padding: 0 15px; }
.site { padding: 12px 10px 15px 12px; border: 1px solid #edf2f9; }
.site h3 { color: #50545a; font-size: 13px; line-height: 20px; margin-bottom: 16px; }
.site-head { display: flex; gap: 24px; padding-left: 3px; margin-bottom: 12px; }
.pin text { fill: #fff; font-size: 14px; font-weight: 500; }
.site-name { line-height: 22px; }
.site-addr { color: #95aac9; font-size: 12px; line-height: 19px; }
.rows { display: grid; grid-template-columns: 317fr 324fr; padding-left: 5px; }
.rows dt, .rows dd { padding: 6px 22px 6px 0; }
.rows dd { color: #95aac9; }

.path { margin-top: 29px; padding-top: 11px; border-top: 1px solid #edf2f9; }
.path-rows { grid-template-columns: 334fr 362fr 333fr 351fr; margin: 13px 0 8px; padding-left: 17px; }

/* map */
.map { position: relative; height: 372px; overflow: hidden; background: #e8e8e8; }
.map-art { width: 100%; height: 100%; font-family: Roboto, sans-serif; }
.st { fill: none; stroke: #fff; stroke-width: 1; }
.half path { vector-effect: non-scaling-stroke; stroke-linejoin: round; stroke-linecap: round; }
.green { fill: #c9ebc9; }
.campus { fill: #e1e5ec; }
.pink { fill: #fbe3e0; }
.sand { fill: #fdf0cd; }
.water { fill: #aadaff; stroke: #aadaff; stroke-width: 2; }
.river { fill: none; stroke: #aadaff; stroke-width: 9; }
.river.thin { stroke-width: 3; }
.brook { fill: none; stroke: #aadaff; stroke-width: 1; }
.rail { fill: none; stroke: #d2d3d6; stroke-width: 2; }
.road { fill: none; stroke: #fff; stroke-width: 2; }
.tunnel { fill: none; stroke: #d6cfc2; stroke-width: 5; }
.hw { fill: none; stroke: #f6d06c; stroke-width: 5; }
.hw.top { stroke: #fde69f; stroke-width: 3; }
.route { fill: none; stroke: #12a5f4; stroke-width: 2; stroke-linejoin: round; }
.map-art text { text-anchor: middle; }
.map-art .start { text-anchor: start; }
.map-art .end { text-anchor: end; }
.street { font-size: 10px; fill: #62686e; stroke: #f4f4f4; stroke-width: 2; paint-order: stroke; }
.place { font-size: 14px; fill: #4a4f55; stroke: #fff; stroke-width: 2; paint-order: stroke; stroke-linejoin: round; }
.uni { fill: #546e7a; }
.park { fill: #188050; }
.food { fill: #d5710a; }
.shop { fill: #3b78e7; }
.area { fill: #7b83ad; font-size: 13px; letter-spacing: 1px; }
.shield rect { fill: #6b9e41; }
.shield text { fill: #fff; font-size: 10px; font-weight: 700; }
.station circle { fill: #f9ab00; stroke: #fff; stroke-width: .5; }
.station path { stroke: #fff; stroke-width: 1; }
.marker text { fill: #fff; font-size: 14px; }
.map-art .google { text-anchor: start; font-family: Lato, sans-serif; font-size: 20px; font-weight: 700; stroke: #fff; stroke-width: 1; paint-order: stroke; }
.conduit {
  position: absolute;
  top: 10px;
  right: 10px;
  display: flex;
  align-items: center;
  gap: 4px;
  height: 42px;
  padding: 0 32px;
  background: #fff;
  color: #2c6fe0;
}
.conduit svg { width: 14px; height: 14px; fill: none; stroke: currentColor; stroke-width: 2; stroke-linecap: round; stroke-linejoin: round; }
.zoom { position: absolute; right: 10px; bottom: 24px; width: 40px; padding: 0 5px; background: #fff; border-radius: 2px; box-shadow: 0 1px 4px rgba(0, 0, 0, .3); }
.zoom button { display: grid; place-items: center; width: 30px; height: 40px; }
.zoom button + button { border-top: 1px solid #e6e6e6; height: 41px; }
.zoom svg { width: 18px; height: 18px; stroke: #666; stroke-width: 4; }
.credits { position: absolute; right: 0; bottom: 0; display: flex; gap: 12px; padding: 0 6px; background: rgba(245, 245, 245, .7); color: #222; font-family: Roboto, sans-serif; font-size: 10px; line-height: 14px; }
```
